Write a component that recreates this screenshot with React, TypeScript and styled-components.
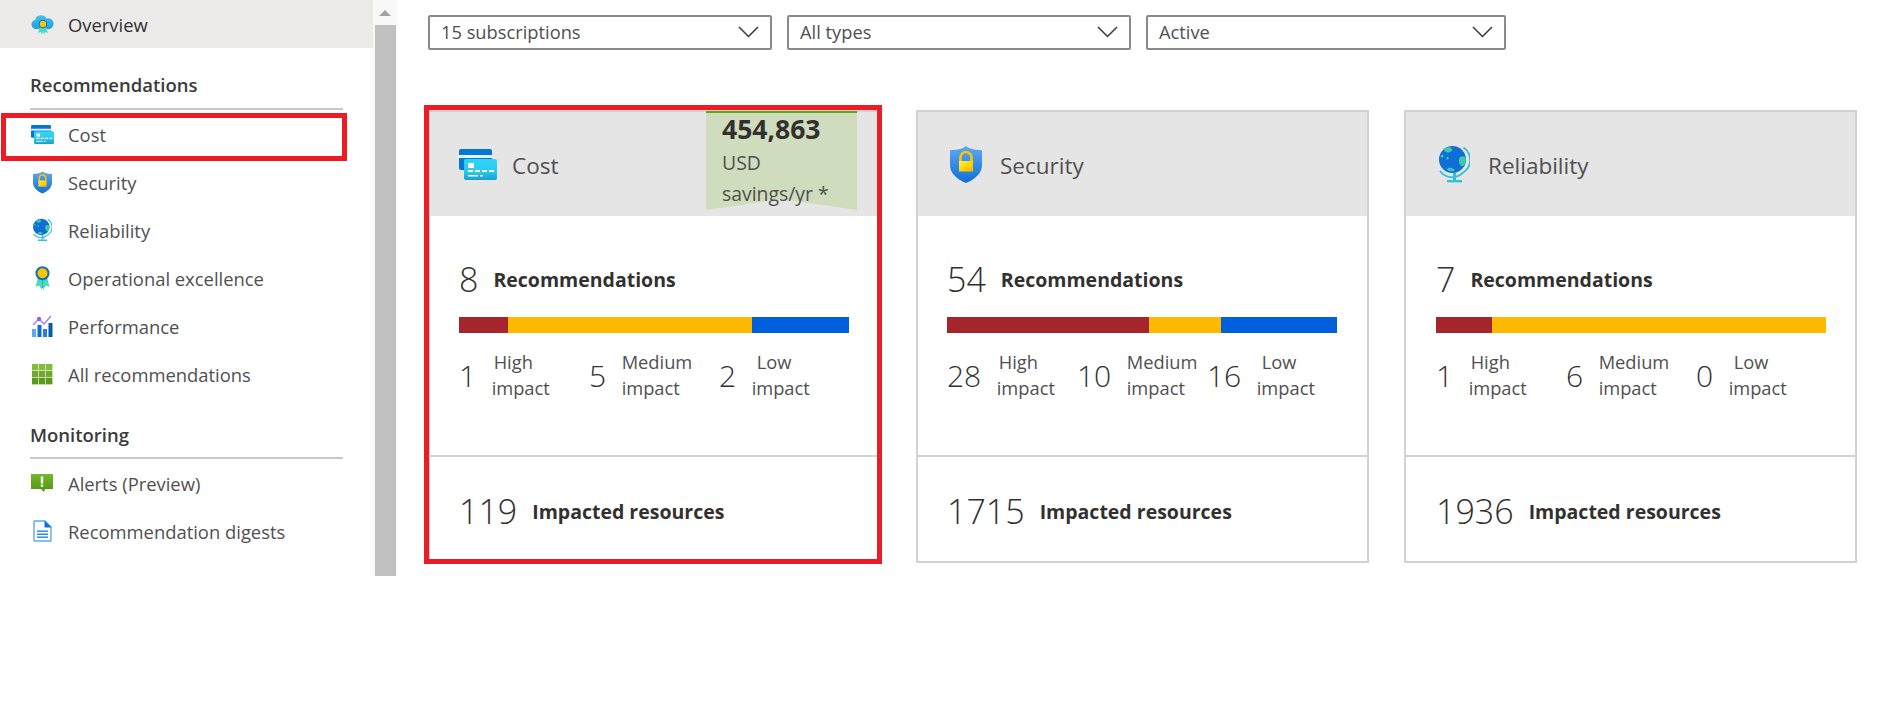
import React from "react";
import styled, { createGlobalStyle, css } from "styled-components";

const Global = createGlobalStyle`
  html, body { margin: 0; padding: 0; background: #fff; }
  body { font-family: "Open Sans", "Liberation Sans", sans-serif; color: #323130; overflow: hidden; }
`;

const Page = styled.div`
  display: flex;
  align-items: flex-start;
  width: 1895px;
  height: 726px;
`;

const Sidebar = styled.aside`
  display: flex;
  width: 397px;
  height: 576px;
  flex: none;
`;

const Nav = styled.nav`
  width: 373px;
  flex: none;
`;

const Track = styled.div`
  position: relative;
  width: 24px;
  background: #f8f8f8;
  display: flex;
  flex-direction: column;
  align-items: center;
`;

const TrackArrow = styled.div`
  height: 25px;
  flex: none;
  display: flex;
  align-items: center;
  justify-content: center;
  &::before {
    content: "";
    border-left: 6px solid transparent;
    border-right: 6px solid transparent;
    border-bottom: 6px solid #a3a3a3;
  }
`;

const Thumb = styled.div`
  width: 21px;
  flex: 1;
  background: #c0c0c0;
`;

const NavRow = styled.div<{ $active?: boolean; $boxed?: boolean }>`
  position: relative;
  display: flex;
  align-items: center;
  height: 48px;
  box-sizing: border-box;
  padding-left: 30px;
  padding-bottom: ${(p) => (p.$active ? "0" : "2px")};
  font-size: 18.4px;
  color: ${(p) => (p.$active ? "#323130" : "#505050")};
  background: ${(p) => (p.$active ? "#edebe9" : "transparent")};
  ${(p) =>
    p.$boxed &&
    css`
      &::after {
        content: "";
        position: absolute;
        left: 1px;
        top: 2px;
        width: 346px;
        height: 48px;
        box-sizing: border-box;
        border: 5px solid #ed1c24;
      }
    `}
`;

const NavIcon = styled.span`
  width: 24px;
  display: flex;
  justify-content: center;
  margin-right: 14px;
  flex: none;
`;

const SectionTitle = styled.div<{ $first?: boolean }>`
  margin: ${(p) => (p.$first ? "25px" : "24px")} 30px 1px;
  padding-bottom: ${(p) => (p.$first ? "11px" : "10px")};
  line-height: 24px;
  font-size: 18.5px;
  font-weight: 550;
  color: #3b3b3b;
  border-bottom: 2px solid #c8c8c8;
`;

const Main = styled.main`
  flex: 1;
  padding: 15px 0 0 31px;
`;

const Filters = styled.div`
  display: flex;
  gap: 15px;
`;

const Filter = styled.div<{ $width: number }>`
  width: ${(p) => p.$width}px;
  height: 35px;
  box-sizing: border-box;
  border: 2px solid #8a8a8a;
  border-radius: 2px;
  display: flex;
  align-items: center;
  justify-content: space-between;
  padding: 0 11px 2px 11px;
  font-size: 18.3px;
  color: #505050;
`;

const Cards = styled.div`
  display: flex;
  gap: 35px;
  margin-top: 60px;
`;

const Card = styled.section<{ $boxed?: boolean }>`
  position: relative;
  width: 453px;
  height: 453px;
  box-sizing: border-box;
  border: 2px solid #d2d2d2;
  display: flex;
  flex-direction: column;
  ${(p) =>
    p.$boxed &&
    css`
      &::after {
        content: "";
        position: absolute;
        inset: -7px -3px -3px -6px;
        border: 5px solid #ed1c24;
        pointer-events: none;
      }
    `}
`;

const CardHeader = styled.header`
  height: 104px;
  flex: none;
  background: #e5e5e5;
  display: flex;
  align-items: center;
  padding-left: 29px;
  position: relative;
`;

const HeaderIcon = styled.span`
  width: 38px;
  margin-right: 15px;
  display: flex;
  justify-content: center;
  flex: none;
`;

const CardTitle = styled.h2`
  margin: 2px 0 0;
  font-size: 22.5px;
  font-weight: 400;
  color: #505050;
`;

const Ribbon = styled.div`
  position: relative;
  align-self: flex-start;
  margin: -1px 22px 0 auto;
  width: 151px;
  height: 99px;
  box-sizing: border-box;
  padding: 0 0 0 16px;
  &::before {
    content: "";
    position: absolute;
    inset: 0;
    box-sizing: border-box;
    background: #cfdcbd;
    border-top: 2px solid #5ea80e;
    clip-path: polygon(0 0, 100% 0, 100% 100%, 50% 89%, 0 100%);
  }
`;

const RibbonValue = styled.div`
  position: relative;
  font-size: 26.5px;
  line-height: 36px;
  font-weight: 700;
  color: #323130;
`;

const RibbonText = styled.div`
  position: relative;
  font-size: 19.4px;
  line-height: 31px;
  color: #505050;
  white-space: nowrap;
`;

const CardBody = styled.div<{ $pad: number }>`
  height: 241px;
  flex: none;
  box-sizing: border-box;
  padding: 43px 0 0 ${(p) => p.$pad}px;
  border-bottom: 2px solid #d2d2d2;
`;

const Heading = styled.div`
  display: flex;
  align-items: center;
  height: 40px;
  gap: 15px;
`;

const BigNumber = styled.span`
  font-size: 34px;
  font-weight: 300;
  color: #323130;
`;

const BoldLabel = styled.span`
  font-size: 19.5px;
  font-weight: 700;
  color: #323130;
`;

const Bar = styled.div`
  display: flex;
  width: 390px;
  height: 16px;
  margin-top: 18px;
`;

const Segment = styled.div<{ $color: string; $grow: number }>`
  flex: ${(p) => p.$grow} 0 0;
  background: ${(p) => p.$color};
`;

const Counts = styled.div`
  display: grid;
  grid-template-columns: repeat(3, 130px);
  margin-top: 16px;
`;

const Count = styled.div`
  display: flex;
  align-items: center;
  gap: 15.5px;
`;

const CountNumber = styled.span`
  font-size: 30px;
  font-weight: 300;
  color: #323130;
`;

const CountLabel = styled.div`
  font-size: 18.3px;
  line-height: 26px;
  color: #505050;
`;

const CountLevel = styled.div<{ $indent: number }>`
  padding-left: ${(p) => p.$indent}px;
`;

const CardFooter = styled.div<{ $pad: number }>`
  flex: 1;
  display: flex;
  align-items: center;
  gap: 15px;
  padding: 4px 0 0 ${(p) => p.$pad}px;
`;

/* ---------- icons ---------- */

const OverviewIcon = () => (
  <svg width="23" height="21" viewBox="0 0 23 21">
    <defs>
      <linearGradient id="ovc" x1="0" y1="0" x2="0" y2="1">
        <stop offset="0" stopColor="#3fc2f5" />
        <stop offset="1" stopColor="#1c9fe0" />
      </linearGradient>
    </defs>
    <path d="M5 15a4.6 4.6 0 0 1-.8-9.1A6 6 0 0 1 15.4 4.4 4.6 4.6 0 0 1 18.6 15Z" fill="url(#ovc)" />
    <path d="M9 13l-2 6 2.6-1 1.4 2.4 1-3.4 1 3.4 1.4-2.4 2.6 1-2-6Z" fill="#4fd8c4" />
    <circle cx="12" cy="10" r="4.2" fill="#0f6cbd" />
    <circle cx="12" cy="10" r="3.2" fill="#ffc400" />
  </svg>
);

const CostIcon = ({ w = 23, h = 19 }: { w?: number; h?: number }) => (
  <svg width={w} height={h} viewBox="0 0 38 31">
    <defs>
      <linearGradient id="cc" x1="0" y1="0" x2="0" y2="1">
        <stop offset="0" stopColor="#32d4f5" />
        <stop offset="0.6" stopColor="#2bcaf0" />
        <stop offset="1" stopColor="#1a9dd0" />
      </linearGradient>
    </defs>
    <rect x="0" y="0" width="33" height="21" rx="2" fill="#0078d4" />
    <rect x="0" y="6" width="33" height="3" fill="#e6f2fb" />
    <rect x="5" y="10" width="33" height="21" rx="2" fill="url(#cc)" />
    <rect x="9" y="14" width="6" height="5" fill="#fff" />
    <rect x="9" y="21" width="5" height="2" fill="#fff" />
    <rect x="16" y="21" width="5" height="2" fill="#fff" />
    <rect x="23" y="21" width="5" height="2" fill="#fff" />
    <rect x="30" y="21" width="5" height="2" fill="#fff" />
    <rect x="9" y="26" width="10" height="1.5" fill="#fff" />
    <rect x="21" y="26" width="3" height="1.5" fill="#fff" />
  </svg>
);

const ShieldIcon = ({ w = 19, h = 23 }: { w?: number; h?: number }) => (
  <svg width={w} height={h} viewBox="0 0 32 37">
    <defs>
      <linearGradient id="sh" x1="0" y1="0" x2="0" y2="1">
        <stop offset="0" stopColor="#5ea8f2" />
        <stop offset="1" stopColor="#0f6fd6" />
      </linearGradient>
      <linearGradient id="lk" x1="0" y1="0" x2="1" y2="1">
        <stop offset="0" stopColor="#fff06a" />
        <stop offset="0.5" stopColor="#ffd400" />
        <stop offset="1" stopColor="#f5b800" />
      </linearGradient>
    </defs>
    <path d="M16 0c3 2.6 8 4 16 4.2V19c0 8-6.6 14-16 18C6.6 33 0 27 0 19V4.2C8 4 13 2.6 16 0Z" fill="url(#sh)" />
    <path d="M10.5 15v-3.5a5.5 5.5 0 0 1 11 0V15" fill="none" stroke="#ffc400" strokeWidth="2.6" />
    <rect x="9" y="15" width="14" height="10.500" fill="url(#lk)" />
  </svg>
);

const GlobeIcon = ({ w = 19, h = 24 }: { w?: number; h?: number }) => (
  <svg width={w} height={h} viewBox="0 0 31 37">
    <path d="M24.500 1.500a15 15 0 0 1-1 25.500A15 15 0 0 1 1 25" fill="none" stroke="#32bedd" strokeWidth="1.800" />
    <circle cx="13.500" cy="13.500" r="13.500" fill="#0f6fd6" />
    <path d="M6 2c3-1.500 6-1 7 1s-3 4-5 3.500S4 3.500 6 2ZM21 11c3-1.500 5-.5 5.800 1.500.6 3-.8 6-3 8-2-.5-3.500-2-3.800-4.500-.2-2 0-4 1-5ZM9 22c3-.8 6 .2 7 2.800-2.500.8-5 .6-7.500-.2-.6-1-.4-2 .5-2.600ZM2.500 9c1.200-.4 2 .2 2 1.200s-1 1.500-2 1.200-1-2 0-2.400ZM8 11c1-.3 1.800.3 1.800 1.300s-1 1.400-1.800 1.100-1-2 0-2.400Z" fill="#3fc9a6" />
    <rect x="14" y="27" width="3" height="7" fill="#32bedd" />
    <rect x="8" y="34" width="15" height="2.400" fill="#32bedd" />
  </svg>
);

const MedalIcon = () => (
  <svg width="15" height="24" viewBox="0 0 15 24">
    <path d="M3 11 0.500 21l3.500-1.500L7 24l0.500-9 0.500 9 3-4.500 3.500 1.500L12 11Z" fill="#4fd8c0" />
    <path d="M7.500 13v9" stroke="#2fb5a0" strokeWidth="1" />
    <circle cx="7.500" cy="7.200" r="7" fill="#0f6fb8" />
    <circle cx="7.500" cy="7.200" r="5" fill="#ffc400" />
  </svg>
);

const PerfIcon = () => (
  <svg width="21" height="22" viewBox="0 0 21 22">
    <path d="M1 10 7 4l5 5 7-8" fill="none" stroke="#a77bf0" strokeWidth="1.400" />
    <circle cx="7" cy="4" r="2.200" fill="#a25ce6" />
    <rect x="0" y="14" width="4" height="8" fill="#5ea8f2" />
    <rect x="5.500" y="10" width="4" height="12" fill="#0f6fc6" />
    <rect x="11" y="14" width="4" height="8" fill="#2a80d2" />
    <rect x="16.500" y="8" width="4" height="14" fill="#0b5aa8" />
  </svg>
);

const GridIcon = () => {
  const cells = [0, 7, 14].flatMap((y) => [0, 7, 14].map((x) => ({ x, y })));
  return (
    <svg width="21" height="21" viewBox="0 0 21 21">
      {cells.map((c) => (
        <rect
          key={`${c.x}-${c.y}`}
          x={c.x}
          y={c.y}
          width="6.400"
          height="6.400"
          fill={c.y === 0 ? "#86bc3c" : c.y === 7 ? "#72aa2e" : "#5e9a22"}
        />
      ))}
    </svg>
  );
};

const AlertIcon = () => (
  <svg width="22" height="18" viewBox="0 0 22 18">
    <defs>
      <linearGradient id="al" x1="0" y1="0" x2="0" y2="1">
        <stop offset="0" stopColor="#76b82a" />
        <stop offset="1" stopColor="#4f9414" />
      </linearGradient>
    </defs>
    <path d="M0 0h22v15h-8l-1 3-3-3H0Z" fill="url(#al)" />
    <rect x="9.800" y="2.500" width="2.400" height="7" fill="#fff" />
    <rect x="9.800" y="10.500" width="2.400" height="2.400" fill="#fff" />
  </svg>
);

const DocIcon = () => (
  <svg width="19" height="22" viewBox="0 0 19 22">
    <path d="M1 1.500c0-.3.2-.5.500-.500H12l6 6v13.500c0 .3-.2.500-.5.500h-16a.5.5 0 0 1-.5-.500Z" fill="#fff" stroke="#5ea8f2" strokeWidth="1.400" />
    <path d="M11.500 0.800 18.500 7.500h-7Z" fill="#0f6fd6" />
    <rect x="4" y="10.500" width="11" height="1.400" fill="#1a86dc" />
    <rect x="4" y="13.500" width="11" height="1.400" fill="#1a86dc" />
    <rect x="4" y="16.500" width="11" height="1.400" fill="#1a86dc" />
  </svg>
);

const Chevron = () => (
  <svg width="21" height="12" viewBox="0 0 21 12">
    <path d="M1 1 10.500 10.500 20 1" fill="none" stroke="#3a3a3a" strokeWidth="1.500" />
  </svg>
);

/* ---------- data ---------- */

const HIGH = "#a4262c";
const MEDIUM = "#ffb900";
const LOW = "#005fdb";

const cards = [
  {
    title: "Cost",
    icon: <CostIcon w={38} h={31} />,
    total: 8,
    high: 1,
    medium: 5,
    low: 2,
    resources: 119,
    boxed: true,
    savings: "454,863",
    pad: 29,
  },
  {
    title: "Security",
    icon: <ShieldIcon w={32} h={37} />,
    total: 54,
    high: 28,
    medium: 10,
    low: 16,
    resources: 1715,
    pad: 29,
  },
  {
    title: "Reliability",
    icon: <GlobeIcon w={31} h={37} />,
    total: 7,
    high: 1,
    medium: 6,
    low: 0,
    resources: 1936,
    pad: 30,
  },
];

const recommendationLinks = [
  { label: "Cost", icon: <CostIcon />, boxed: true },
  { label: "Security", icon: <ShieldIcon /> },
  { label: "Reliability", icon: <GlobeIcon /> },
  { label: "Operational excellence", icon: <MedalIcon /> },
  { label: "Performance", icon: <PerfIcon /> },
  { label: "All recommendations", icon: <GridIcon /> },
];

const monitoringLinks = [
  { label: "Alerts (Preview)", icon: <AlertIcon /> },
  { label: "Recommendation digests", icon: <DocIcon /> },
];

const filters = [
  { label: "15 subscriptions", width: 344 },
  { label: "All types", width: 344 },
  { label: "Active", width: 360 },
];

export default function App() {
  return (
    <Page>
      <Global />
      <Sidebar>
        <Nav>
          <NavRow $active>
            <NavIcon>
              <OverviewIcon />
            </NavIcon>
            Overview
          </NavRow>
          <SectionTitle $first>Recommendations</SectionTitle>
          {recommendationLinks.map((l) => (
            <NavRow key={l.label} $boxed={l.boxed}>
              <NavIcon>{l.icon}</NavIcon>
              {l.label}
            </NavRow>
          ))}
          <SectionTitle>Monitoring</SectionTitle>
          {monitoringLinks.map((l) => (
            <NavRow key={l.label}>
              <NavIcon>{l.icon}</NavIcon>
              {l.label}
            </NavRow>
          ))}
        </Nav>
        <Track>
          <TrackArrow />
          <Thumb />
        </Track>
      </Sidebar>
      <Main>
        <Filters>
          {filters.map((f) => (
            <Filter key={f.label} $width={f.width}>
              {f.label}
              <Chevron />
            </Filter>
          ))}
        </Filters>
        <Cards>
          {cards.map((c) => (
            <Card key={c.title} $boxed={c.boxed}>
              <CardHeader>
                <HeaderIcon>{c.icon}</HeaderIcon>
                <CardTitle>{c.title}</CardTitle>
                {c.savings && (
                  <Ribbon>
                    <RibbonValue>{c.savings}</RibbonValue>
                    <RibbonText>USD</RibbonText>
                    <RibbonText>savings/yr *</RibbonText>
                  </Ribbon>
                )}
              </CardHeader>
              <CardBody $pad={c.pad}>
                <Heading>
                  <BigNumber>{c.total}</BigNumber>
                  <BoldLabel>Recommendations</BoldLabel>
                </Heading>
                <Bar>
                  <Segment $color={HIGH} $grow={c.high} />
                  <Segment $color={MEDIUM} $grow={c.medium} />
                  <Segment $color={LOW} $grow={c.low} />
                </Bar>
                <Counts>
                  <Count>
                    <CountNumber>{c.high}</CountNumber>
                    <CountLabel>
                      <CountLevel $indent={2}>High</CountLevel>
                      impact
                    </CountLabel>
                  </Count>
                  <Count>
                    <CountNumber>{c.medium}</CountNumber>
                    <CountLabel>
                      <CountLevel $indent={0}>Medium</CountLevel>
                      impact
                    </CountLabel>
                  </Count>
                  <Count>
                    <CountNumber>{c.low}</CountNumber>
                    <CountLabel>
                      <CountLevel $indent={5}>Low</CountLevel>
                      impact
                    </CountLabel>
                  </Count>
                </Counts>
              </CardBody>
              <CardFooter $pad={c.pad}>
                <BigNumber>{c.resources}</BigNumber>
                <BoldLabel>Impacted resources</BoldLabel>
              </CardFooter>
            </Card>
          ))}
        </Cards>
      </Main>
    </Page>
  );
}
